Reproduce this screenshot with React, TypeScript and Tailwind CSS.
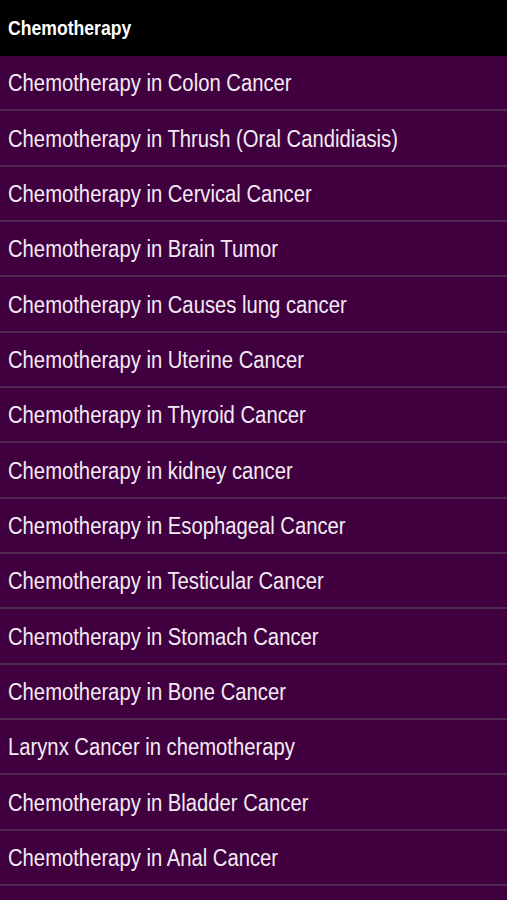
const items = [
  "Chemotherapy in Colon Cancer",
  "Chemotherapy in Thrush (Oral Candidiasis)",
  "Chemotherapy in Cervical Cancer",
  "Chemotherapy in Brain Tumor",
  "Chemotherapy in Causes lung cancer",
  "Chemotherapy in Uterine Cancer",
  "Chemotherapy in Thyroid Cancer",
  "Chemotherapy in kidney cancer",
  "Chemotherapy in Esophageal Cancer",
  "Chemotherapy in Testicular Cancer",
  "Chemotherapy in Stomach Cancer",
  "Chemotherapy in Bone Cancer",
  "Larynx Cancer in chemotherapy",
  "Chemotherapy in Bladder Cancer",
  "Chemotherapy in Anal Cancer",
];

export default function App() {
  return (
    <div className="w-[507px] h-[900px] overflow-hidden bg-[#400040] font-['Liberation_Sans',sans-serif]">
      <div className="h-[56px] bg-black flex items-center px-2">
        <h1 className="text-white text-[20px] font-bold origin-left scale-x-[0.88] whitespace-nowrap">Chemotherapy</h1>
      </div>
      <div className="flex flex-col">
        {items.map((item) => (
          <div
            key={item}
            className="h-[55.33px] border-b-2 border-[#4e2a4e] flex items-center px-2 pt-[2px]"
          >
            <span className="text-[#f4eaf4] text-[23px] origin-left scale-x-[0.88] whitespace-nowrap">{item}</span>
          </div>
        ))}
      </div>
    </div>
  );
}
